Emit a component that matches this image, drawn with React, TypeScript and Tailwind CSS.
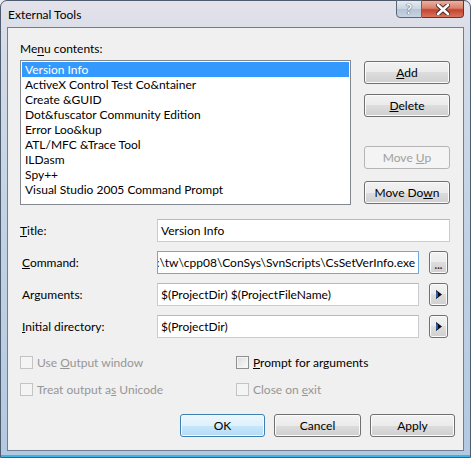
import React from "react";
import clsx from "clsx";

const font = { fontFamily: "Lato, 'Noto Sans', sans-serif" };

const items = [
  "Version Info",
  "ActiveX Control Test Co&ntainer",
  "Create &GUID",
  "Dot&fuscator Community Edition",
  "Error Loo&kup",
  "ATL/MFC &Trace Tool",
  "ILDasm",
  "Spy++",
  "Visual Studio 2005 Command Prompt",
];

const Btn = ({ children, className, disabled, primary }: any) => (
  <div
    className={clsx(
      "flex h-[23px] items-center justify-center rounded-[3px] border text-[12px] shadow-[inset_0_0_0_1px_#fbfbfb]",
      disabled
        ? "border-[#b5b5b5] bg-[#f4f4f4] text-[#a0a0a0] shadow-none"
        : primary
        ? "border-[#3c7fb1] bg-[linear-gradient(#eaf6fd_0%,#dff1fc_50%,#c6e7fb_50%,#b4dcf4_100%)] text-black"
        : "border-[#707070] bg-[linear-gradient(#f2f2f2_0%,#ebebeb_50%,#dddddd_50%,#cfcfcf_100%)] text-black",
      className
    )}
  >
    <span className="whitespace-pre">{children}</span>
  </div>
);

const Arrow = () => (
  <Btn className="ml-[10px] h-[21px] w-[19px]">
    <svg width="6" height="9" viewBox="0 0 6 9" className="block">
      <polygon points="0,0 6,4.5 0,9" fill="#0a0a1a" />
      <polygon points="0,1 2,2.5 2,6.5 0,8" fill="#2b5fa8" />
    </svg>
  </Btn>
);

const Field = ({ label, value, after, focus, narrow, indent }: any) => (
  <div className="flex h-[23px] items-center">
    <div className={clsx("w-[137px] text-[12px]", indent && "pl-[2px]")}>{label}</div>
    <div
      className={clsx(
        "flex h-[23px] items-center overflow-hidden border bg-white px-[3px] text-[12px]",
        focus ? "justify-end border-[#6fa8dc]" : "border-[#c9ccd1] border-t-[#b5b8bd]",
        narrow ? "w-[262px]" : "w-[293px]"
      )}
    >
      <span className="whitespace-nowrap">{value}</span>
    </div>
    {after}
  </div>
);

const Check = ({ label, disabled }: any) => (
  <div className={clsx("flex h-[13px] items-center text-[12px]", disabled ? "text-[#969696]" : "text-black")}>
    <div
      className={clsx(
        "h-[13px] w-[13px] border",
        disabled
          ? "border-[#c4c4c4] bg-[#f4f4f4]"
          : "border-[#8e8f8f] bg-[linear-gradient(135deg,#dcdcdc,#fbfbfb)] shadow-[inset_0_0_0_1px_#f4f4f4]"
      )}
    />
    <span className="ml-[4px] whitespace-nowrap">{label}</span>
  </div>
);

export default function App() {
  return (
    <div className="h-[458px] w-[471px] overflow-hidden bg-[#e9edf3]" style={font}>
      <div className="flex h-full flex-col rounded-t-[7px] border border-[#4d5c6e] bg-[linear-gradient(180deg,#e4e2ea_0%,#d3dbe7_12%,#c2d2e4_50%,#b3c9e1_100%)]">
        <div className="flex h-[26px] items-start">
          <div className="pl-[7px] pt-[6px] text-[12px] leading-[15px] text-black">External Tools</div>
          <div className="ml-auto mr-[6px] mt-[-1px] flex">
            <div className="flex h-[18px] w-[26px] items-center justify-center rounded-bl-[4px] border border-[#5a6677] bg-[linear-gradient(#e5ebf2_0%,#c9d4e0_50%,#b4c2d2_50%,#c7d4e2_100%)] text-[14px] font-bold leading-none text-white [text-shadow:0_0_1px_#3a4656,0_0_1px_#3a4656]">
              ?
            </div>
            <div className="flex h-[18px] w-[42px] items-center justify-center rounded-br-[4px] border border-l-0 border-[#5a3a36] bg-[linear-gradient(#eab0a2_0%,#d8806c_45%,#c4442e_55%,#d9745c_100%)]">
              <svg width="14" height="11" viewBox="0 0 14 11">
                <path d="M2 1 L12 10 M12 1 L2 10" stroke="#4a2620" strokeWidth="4.5" strokeLinecap="round" />
                <path d="M2 1 L12 10 M12 1 L2 10" stroke="#ffffff" strokeWidth="2.6" strokeLinecap="round" />
              </svg>
            </div>
          </div>
        </div>

        <div className="mx-[6px] h-[424px] border border-[#6d7f93] bg-[#f0f0f0] pl-[12px] pr-[12px] pt-[13px] text-black">
          <div className="h-[15px] text-[12px] leading-[15px]">
            Me<u className="underline-offset-2">n</u>u contents:
          </div>

          <div className="mt-[4px] flex">
            <div className="h-[145px] w-[331px] border border-[#828790] bg-white p-[1px]">
              {items.map((t, i) => (
                <div
                  key={t}
                  className={clsx(
                    "h-[15px] whitespace-nowrap pl-[3px] text-[12px] leading-[15px]",
                    i === 0 ? "bg-[#3399ff] text-white" : "text-black"
                  )}
                >
                  {t}
                </div>
              ))}
            </div>
            <div className="ml-[13px] flex w-[86px] flex-col pt-[1px]">
              <Btn>
                <u>A</u>dd
              </Btn>
              <Btn className="mt-[10px]">
                <u>D</u>elete
              </Btn>
              <Btn className="mt-[29px]" disabled>
                Move <u>U</u>p
              </Btn>
              <Btn className="mt-[12px]">
                Move Do<u>w</u>n
              </Btn>
            </div>
          </div>

          <div className="mt-[14px] flex flex-col gap-[9px]">
            <Field label={<><u>T</u>itle:</>} value="Version Info" />
            <Field
              indent
              focus
              narrow
              label={<><u>C</u>ommand:</>}
              value=":\tw\cpp08\ConSys\SvnScripts\CsSetVerInfo.exe"
              after={
                <Btn className="ml-[10px] h-[21px] w-[19px]">
                  <span className="block pt-[4px] text-[11px] font-bold leading-[11px] text-[#4a2424]">...</span>
                </Btn>
              }
            />
            <Field
              indent
              narrow
              label={<>Ar<u>g</u>uments:</>}
              value="$(ProjectDir) $(ProjectFileName)"
              after={<Arrow />}
            />
            <Field
              indent
              narrow
              label={<><u>I</u>nitial directory:</>}
              value="$(ProjectDir)"
              after={<Arrow />}
            />
          </div>

          <div className="mt-[18px] grid grid-cols-[216px_1fr] gap-y-[14px]">
            <Check disabled label={<>Use <u>O</u>utput window</>} />
            <Check label={<><u>P</u>rompt for arguments</>} />
            <Check disabled label={<>Treat output a<u>s</u> Unicode</>} />
            <Check disabled label={<>Close on <u>e</u>xit</>} />
          </div>

          <div className="mr-[-4px] mt-[18px] flex justify-end gap-[9px]">
            <Btn primary className="w-[85px]">OK</Btn>
            <Btn className="w-[87px]">Cancel</Btn>
            <Btn className="w-[85px]">Apply</Btn>
          </div>
        </div>
        <div className="flex-1 border-b-2 border-[#39b4e4]" />
      </div>
    </div>
  );
}
